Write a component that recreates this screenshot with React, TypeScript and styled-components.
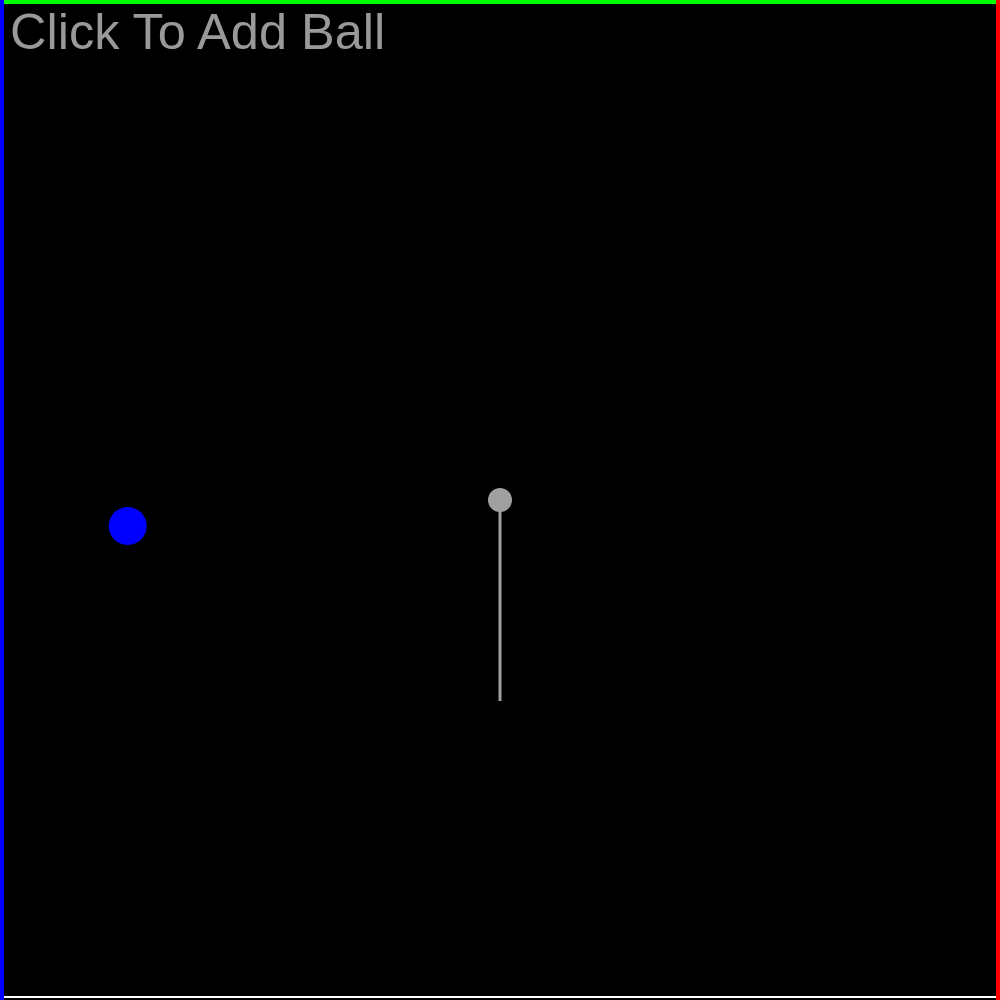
import React from "react";
import styled, { createGlobalStyle } from "styled-components";

const Global = createGlobalStyle`
  html, body {
    margin: 0;
    padding: 0;
    background: #000;
  }
`;

const Stage = styled.div`
  position: relative;
  width: 1000px;
  height: 1000px;
  background: #000;
  overflow: hidden;
  cursor: pointer;
`;

const Scene = styled.svg`
  display: block;
  width: 1000px;
  height: 1000px;
`;

const Hint = styled.div`
  position: absolute;
  top: 7px;
  left: 10px;
  font-family: "Liberation Sans", Arial, sans-serif;
  font-size: 50.5px;
  line-height: 1;
  color: #999999;
  white-space: nowrap;
  user-select: none;
`;

type Ball = { x: number; y: number; r: number; color: string };

const balls: Ball[] = [{ x: 127.7, y: 526, r: 19, color: "#0000ff" }];

const pendulum = { x: 500, y: 500, r: 12, length: 201 };

export default function App() {
  return (
    <>
      <Global />
      <Stage>
        <Scene viewBox="0 0 1000 1000" xmlns="http://www.w3.org/2000/svg">
          <rect x={0} y={0} width={1000} height={1000} fill="#000" />
          {/* walls */}
          <rect x={4} y={0} width={992} height={4} fill="#00ff00" />
          <rect x={0} y={0} width={4} height={1000} fill="#0000ff" />
          <rect x={996} y={0} width={4} height={1000} fill="#ff0000" />
          <rect x={4} y={996} width={992} height={2} fill="#ffffff" />
          {/* pendulum */}
          <rect
            x={pendulum.x - 1.5}
            y={pendulum.y}
            width={3}
            height={pendulum.length}
            fill="#a0a0a0"
          />
          <circle cx={pendulum.x} cy={pendulum.y} r={pendulum.r} fill="#a0a0a0" />
          {/* balls */}
          {balls.map((b, i) => (
            <circle key={i} cx={b.x} cy={b.y} r={b.r} fill={b.color} />
          ))}
        </Scene>
        <Hint>Click To Add Ball</Hint>
      </Stage>
    </>
  );
}
